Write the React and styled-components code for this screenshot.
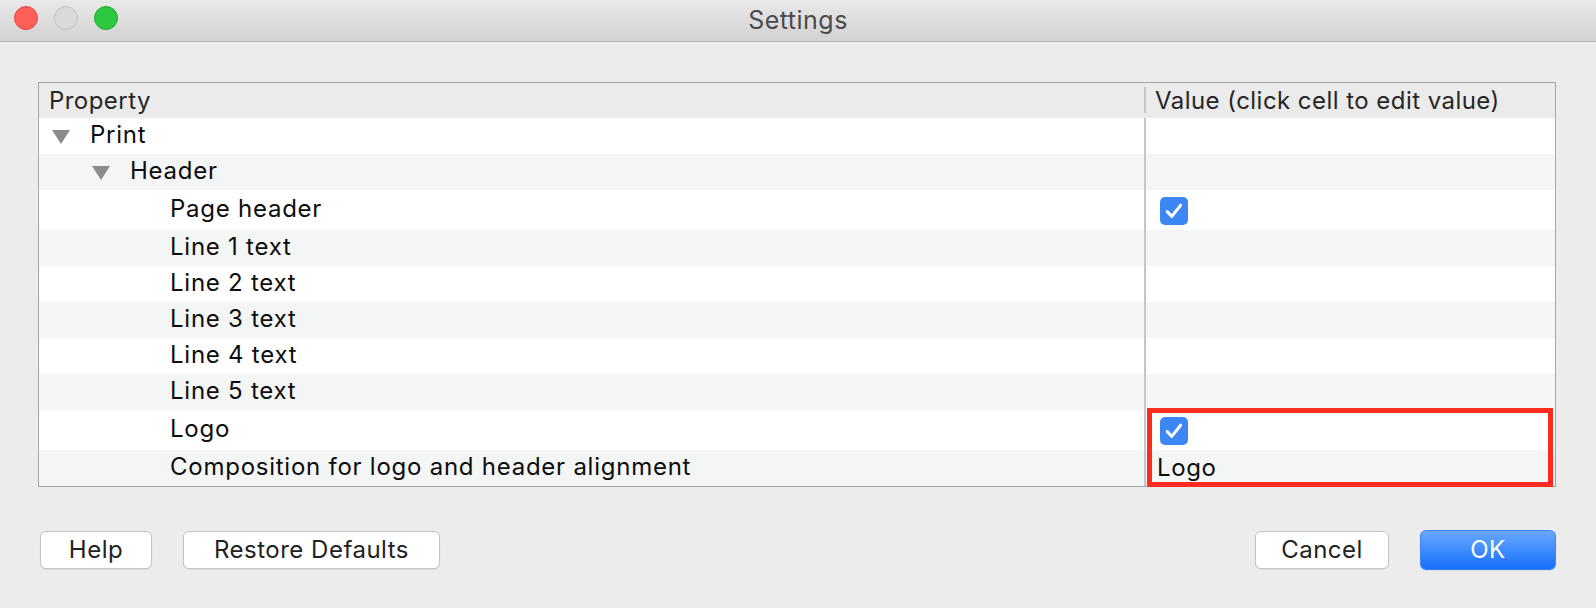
import React from "react";
import styled, { createGlobalStyle } from "styled-components";

const GlobalStyle = createGlobalStyle`
  html, body {
    margin: 0;
    padding: 0;
    overflow: hidden;
    background: #ececec;
  }
  * {
    box-sizing: border-box;
  }
`;

const rows = [
  { label: "Print", level: 0, branch: true },
  { label: "Header", level: 1, branch: true },
  { label: "Page header", level: 2, checked: true },
  { label: "Line 1 text", level: 2 },
  { label: "Line 2 text", level: 2 },
  { label: "Line 3 text", level: 2 },
  { label: "Line 4 text", level: 2 },
  { label: "Line 5 text", level: 2 },
  { label: "Logo", level: 2, checked: true },
  { label: "Composition for logo and header alignment", level: 2, value: "Logo" },
];

const App = () => {
  return (
    <>
      <GlobalStyle />
      <Window>
        <TitleBar>
          <Lights>
            <Light color="#fe5f57" edge="#e2463f" />
            <Light color="#d9d9d9" edge="#c2c2c2" />
            <Light color="#2bc840" edge="#1faa2e" />
          </Lights>
          <Title>Settings</Title>
        </TitleBar>
        <Body>
          <Table>
            <HeadRow>
              <HeadCell>Property</HeadCell>
              <HeadCell divided>Value (click cell to edit value)</HeadCell>
            </HeadRow>
            <Rows>
              {rows.map((row, i) => (
                <Row key={row.label} odd={i % 2 === 1} tall={row.checked}>
                  <NameCell level={row.level}>
                    {row.branch ? <Disclosure /> : <Spacer />}
                    {row.label}
                  </NameCell>
                  <ValueCell>
                    {row.checked && (
                      <Check>
                        <svg width="28" height="28" viewBox="0 0 28 28">
                          <path
                            d="M7.2 14.6 L11.8 19.4 L20.6 8.2"
                            fill="none"
                            stroke="#fff"
                            strokeWidth="3"
                            strokeLinecap="round"
                            strokeLinejoin="round"
                          />
                        </svg>
                      </Check>
                    )}
                    {row.value && <ValueText>{row.value}</ValueText>}
                  </ValueCell>
                </Row>
              ))}
              <Highlight />
            </Rows>
          </Table>
          <Footer>
            <ButtonGroup>
              <Button width={112}>Help</Button>
              <Button width={257}>Restore Defaults</Button>
            </ButtonGroup>
            <ButtonGroup>
              <Button width={134}>Cancel</Button>
              <Button width={136} primary>
                OK
              </Button>
            </ButtonGroup>
          </Footer>
        </Body>
      </Window>
    </>
  );
};

const Window = styled.div`
  width: 1596px;
  height: 608px;
  background: #ececec;
  font-family: Inter, "Noto Sans", "Liberation Sans", sans-serif;
  display: flex;
  flex-direction: column;
`;

const TitleBar = styled.div`
  position: relative;
  height: 42px;
  flex-shrink: 0;
  background: linear-gradient(#e9e9e9, #d2d2d2);
  border-bottom: 1px solid #b3b3b3;
  display: flex;
  align-items: center;
  justify-content: center;
`;

const Lights = styled.div`
  position: absolute;
  left: 14px;
  top: 6px;
  display: flex;
  gap: 16px;
`;

const Light = styled.span`
  width: 24px;
  height: 24px;
  border-radius: 50%;
  background: ${(p) => p.color};
  border: 1px solid ${(p) => p.edge};
`;

const Title = styled.div`
  font-size: 25px;
  color: #4b4b4b;
  letter-spacing: 0.5px;
  margin-top: -2px;
`;

const Body = styled.div`
  flex: 1;
  padding: 40px 40px 0 38px;
  display: flex;
  flex-direction: column;
`;

const Table = styled.div`
  border: 1px solid #a6a6a6;
  background: #ffffff;
`;

const HeadRow = styled.div`
  display: grid;
  grid-template-columns: 1105px 1fr;
  height: 35px;
  background: #ebebeb;
  align-items: center;
`;

const HeadCell = styled.div`
  font-size: 24px;
  letter-spacing: 0.45px;
  color: #262626;
  padding-left: ${(p) => (p.divided ? "9px" : "10px")};
  display: flex;
  align-items: center;
  border-left: ${(p) => (p.divided ? "2px solid #c6c6c6" : "none")};
  margin: ${(p) => (p.divided ? "4px 0 5px" : "0")};
  height: ${(p) => (p.divided ? "26px" : "100%")};
`;

const Rows = styled.div`
  position: relative;
`;

const Row = styled.div`
  display: grid;
  grid-template-columns: 1105px 1fr;
  height: ${(p) => (p.tall ? "40px" : "36px")};
  background: ${(p) => (p.odd ? "#f4f5f5" : "#ffffff")};
`;

const NameCell = styled.div`
  display: flex;
  align-items: center;
  padding-left: ${(p) => 13 + p.level * 40}px;
  font-size: 24px;
  letter-spacing: 0.75px;
  color: #0d0d0d;
  padding-bottom: 3px;
`;

const Disclosure = styled.span`
  width: 0;
  height: 0;
  border-left: 9px solid transparent;
  border-right: 9px solid transparent;
  border-top: 14px solid #8c8c8c;
  margin-right: 20px;
  margin-top: 4px;
`;

const Spacer = styled.span`
  width: 38px;
  flex-shrink: 0;
`;

const ValueCell = styled.div`
  border-left: 2px solid #c6c6c6;
  display: flex;
  align-items: center;
  padding-left: 14px;
`;

const Check = styled.span`
  width: 28px;
  height: 28px;
  border-radius: 5px;
  background: #3c86f6;
  display: flex;
  margin-top: 2px;
`;

const ValueText = styled.span`
  font-size: 24px;
  letter-spacing: 0.6px;
  color: #0d0d0d;
  margin-left: -3px;
  padding-bottom: 2px;
`;

const Highlight = styled.div`
  position: absolute;
  left: 1108px;
  right: 2px;
  bottom: -1px;
  height: 79px;
  border: 5px solid #fb2c1d;
  pointer-events: none;
`;

const Footer = styled.div`
  display: flex;
  justify-content: space-between;
  margin-top: 43px;
  padding-left: 2px;
`;

const ButtonGroup = styled.div`
  display: flex;
  gap: 31px;
  align-items: center;
`;

const Button = styled.button`
  width: ${(p) => p.width}px;
  height: ${(p) => (p.primary ? "40px" : "38px")};
  border-radius: 6px;
  font-family: inherit;
  font-size: 24px;
  letter-spacing: 0.5px;
  color: ${(p) => (p.primary ? "#ffffff" : "#222222")};
  background: ${(p) =>
    p.primary ? "linear-gradient(#68a8fd, #1670fb)" : "#ffffff"};
  border: 1px solid ${(p) => (p.primary ? "#3a86fa" : "#c4c4c4")};
  box-shadow: 0 1px 1px rgba(0, 0, 0, 0.08);
  padding: 0 0 2px;
`;

export default App;
